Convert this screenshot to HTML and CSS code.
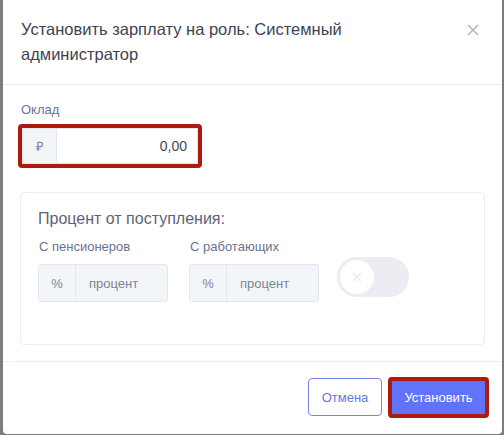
FILE: index.html
```html
<!DOCTYPE html>
<html lang="ru">
<head>
<meta charset="utf-8">
<link rel="stylesheet" href="styles.css">
</head>
<body>
<div class="backdrop">
  <div class="modal">
    <div class="modal-header">
      <div class="modal-title">Установить зарплату на роль: Системный администратор</div>
      <button class="close" aria-label="Закрыть">
        <svg width="12" height="12" viewBox="0 0 12 12"><path d="M1 1L11 11M11 1L1 11" stroke="#b5b5c3" stroke-width="1.6" fill="none"/></svg>
      </button>
    </div>
    <div class="modal-body">
      <div class="label">Оклад</div>
      <div class="highlight">
        <div class="group salary">
          <span class="prepend">₽</span>
          <span class="input value">0,00</span>
        </div>
      </div>
      <div class="card">
        <div class="card-title">Процент от поступления:</div>
        <div class="row">
          <div class="col">
            <div class="label">С пенсионеров</div>
            <div class="group small">
              <span class="prepend">%</span>
              <span class="input placeholder">процент</span>
            </div>
          </div>
          <div class="col">
            <div class="label">С работающих</div>
            <div class="group small">
              <span class="prepend">%</span>
              <span class="input placeholder">процент</span>
            </div>
          </div>
          <div class="col toggle-col">
            <div class="toggle">
              <span class="knob">
                <svg width="12" height="12" viewBox="0 0 12 12"><path d="M2 2L10 10M10 2L2 10" stroke="#e4e6ef" stroke-width="1.2" fill="none"/></svg>
              </span>
            </div>
          </div>
        </div>
      </div>
    </div>
    <div class="modal-footer">
      <button class="btn btn-outline">Отмена</button>
      <div class="highlight btn-wrap">
        <button class="btn btn-primary">Установить</button>
      </div>
    </div>
  </div>
</div>
</body>
</html>
```
FILE: styles.css
```css
* { box-sizing: border-box; }
html, body { margin: 0; padding: 0; }
body {
  width: 504px;
  height: 435px;
  overflow: hidden;
  background: #7b7d80;
  font-family: "Liberation Sans", Arial, sans-serif;
}
.backdrop {
  padding-left: 3px;
  padding-right: 2px;
}
.modal {
  width: 499px;
  height: 434px;
  background: #ffffff;
  border-radius: 0 0 4px 4px;
  display: flex;
  flex-direction: column;
}
.modal-header {
  display: flex;
  justify-content: space-between;
  align-items: flex-start;
  padding: 17px 18px 16px 18px;
  border-bottom: 1px solid #ebedf3;
  height: 85px;
}
.modal-title {
  font-size: 16.5px;
  line-height: 25px;
  color: #3f4254;
  width: 370px;
}
.close {
  border: 0;
  background: none;
  padding: 0;
  margin-top: 7px;
  margin-right: 5px;
  width: 12px;
  height: 12px;
  display: flex;
}
.modal-body {
  padding: 16px 17px 16px 17px;
  border-bottom: 1px solid #ebedf3;
}
.label {
  font-size: 13px;
  line-height: 18px;
  color: #6c7293;
  padding-left: 1px;
}
.modal-body > .label { margin-bottom: 5px; }
.highlight {
  border: 4px solid #ad1a0e;
  border-radius: 4px;
  display: inline-flex;
}
.modal-body > .highlight {
  margin-left: -2px;
  width: 184px;
  height: 44px;
}
.group {
  display: flex;
  border: 1px solid #e4e6ef;
  border-radius: 3px;
  font-size: 13px;
  color: #7e8299;
  overflow: hidden;
}
.salary {
  width: 100%;
  height: 36px;
  border-radius: 0;
}
.prepend {
  background: #f3f6f9;
  border-right: 1px solid #e4e6ef;
  display: flex;
  align-items: center;
  justify-content: center;
  width: 34px;
  flex: none;
}
.input {
  flex: 1;
  display: flex;
  align-items: center;
  padding: 0 12px;
}
.value {
  justify-content: flex-end;
  color: #3f4254;
  font-size: 14px;
  background: #fff;
  padding-right: 10px;
}
.card {
  margin-top: 24px;
  border: 1px solid #ebedf3;
  border-radius: 4px;
  height: 153px;
  padding: 16px 17px;
}
.card-title {
  font-size: 16px;
  line-height: 20px;
  color: #5e6278;
  margin-bottom: 9px;
}
.row {
  display: flex;
  gap: 21px;
  align-items: flex-start;
}
.col .label { margin-bottom: 8px; }
.small {
  width: 130px;
  height: 38px;
  background: #f3f6f9;
}
.small .prepend { width: 37px; }
.placeholder { padding-left: 13px; }
.toggle-col { padding-top: 19px; margin-left: -3px; }
.toggle {
  width: 72px;
  height: 40px;
  border-radius: 20px;
  background: #ebedf3;
  padding: 3px;
  display: flex;
}
.knob {
  width: 34px;
  height: 34px;
  border-radius: 50%;
  background: #ffffff;
  display: flex;
  align-items: center;
  justify-content: center;
}
.modal-footer {
  flex: 1;
  display: flex;
  justify-content: flex-end;
  align-items: flex-start;
  padding: 15px 13px 0 0;
  gap: 6px;
}
.btn {
  font-family: "Liberation Sans", Arial, sans-serif;
  font-size: 13px;
  border-radius: 4px;
  cursor: pointer;
}
.btn-outline {
  margin-top: 1px;
  width: 74px;
  height: 38px;
  background: #ffffff;
  color: #6777e8;
  border: 1px solid #7485e6;
}
.btn-wrap {
  width: 101px;
  height: 41px;
}
.btn-primary {
  width: 100%;
  height: 100%;
  border: 0;
  border-radius: 0;
  background: #5f74fb;
  color: #ffffff;
  padding: 0;
}
```
